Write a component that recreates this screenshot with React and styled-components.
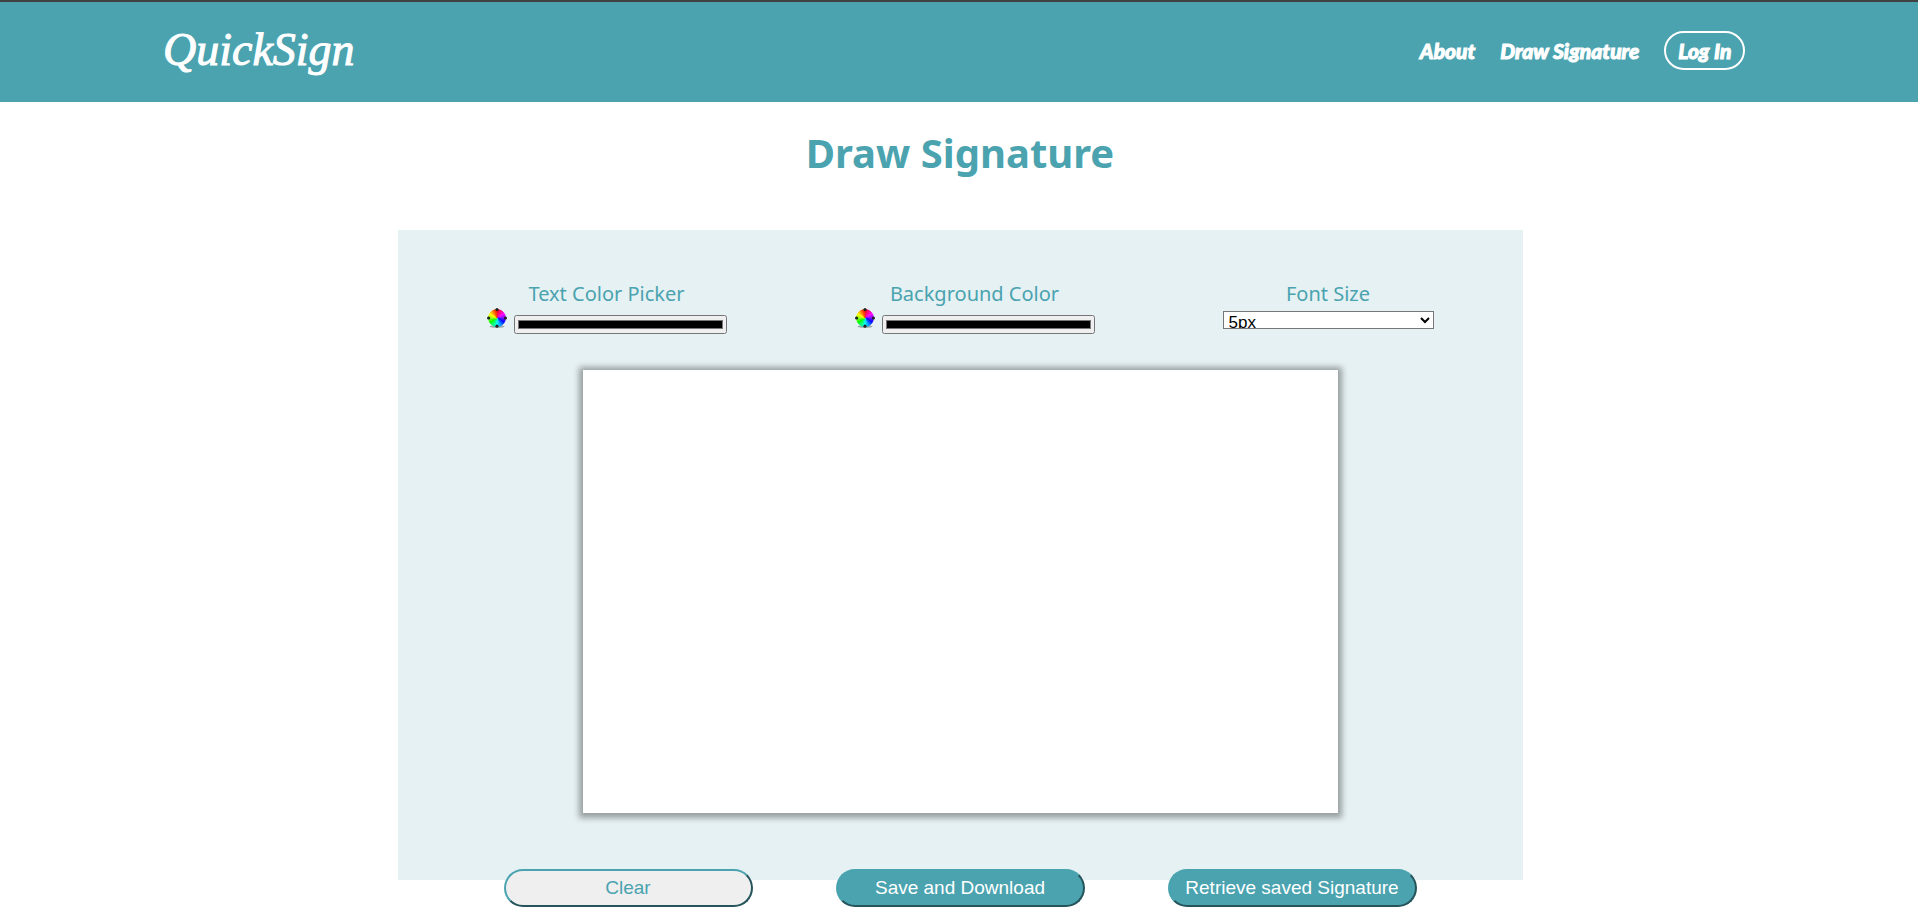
import React, { useRef, useState } from "react";
import styled, { createGlobalStyle } from "styled-components";

const teal = "#4aa3af";

const GlobalStyle = createGlobalStyle`
  * { box-sizing: border-box; }
  body {
    margin: 0;
    background: #fff;
    font-family: "Noto Sans", sans-serif;
  }
`;

const Header = styled.header`
  display: flex;
  align-items: center;
  justify-content: space-between;
  height: 102px;
  padding: 0 9% 4px 163px;
  border-top: 2px solid #414141;
  background: ${teal};
`;

const Logo = styled.a`
  color: #fff;
  font: italic 46px/60px "Liberation Serif", cursive;
  -webkit-text-stroke: 1px #fff;
  text-decoration: none;
`;

const Nav = styled.nav`
  display: flex;
  align-items: center;
  gap: 25px;
`;

const NavLink = styled.a`
  padding: ${(p) => (p.$outlined ? "0 12px" : "0")};
  border: ${(p) => (p.$outlined ? "2px solid #fff" : "0")};
  border-radius: 20px;
  color: #fff;
  font: italic 900 21px/35px Lato, sans-serif;
  -webkit-text-stroke: 1px #fff;
  text-decoration: none;
`;

const Main = styled.main`
  display: flex;
  flex-direction: column;
  align-items: center;
  padding: 23px 0 0 2px;
`;

const Title = styled.h1`
  margin: 0 0 49px;
  color: ${teal};
  font-size: 40px;
  line-height: 56px;
`;

const Panel = styled.section`
  display: flex;
  flex-direction: column;
  align-items: center;
  width: 100%;
  max-width: 1125px;
  padding: 50px 89px 67px;
  background: #e6f1f3;
`;

const Tools = styled.div`
  display: flex;
  justify-content: space-between;
  width: 100%;
  height: 90px;
`;

const Field = styled.div`
  display: flex;
  flex-direction: column;
  align-items: center;
`;

const Label = styled.label`
  color: ${teal};
  font-size: 20px;
  line-height: 28px;
`;

const PickerRow = styled.div`
  display: flex;
  align-items: flex-end;
  gap: 7px;
`;

const Wheel = styled.svg`
  width: 20px;
  height: 20px;
  margin-bottom: 6px;
`;

const ColorInput = styled.input`
  width: 213px;
  height: 19px;
  margin-top: 7px;
  padding: 0 1px;
`;

const SizeSelect = styled.select`
  width: 211px;
  height: 18px;
  margin-top: 3px;
  padding: 0 2px 0 1px;
  border: 1px solid #767676;
  border-radius: 0;
  background: #fff;
  color: #000;
  font: 17px "Liberation Sans", sans-serif;
`;

const Pad = styled.canvas`
  width: 80%;
  max-width: 755px;
  height: 443px;
  background: #fff;
  box-shadow: 0 1px 6px 4px rgba(0, 0, 0, 0.34);
  cursor: crosshair;
`;

const Actions = styled.div`
  display: flex;
  flex-wrap: wrap;
  justify-content: center;
  gap: 83px;
  margin-top: -11px;
`;

const Button = styled.button`
  width: 249px;
  height: 38px;
  padding: 0;
  border: 2px outset ${teal};
  border-radius: 20px;
  background: ${(p) => (p.$plain ? "#efefef" : teal)};
  color: ${(p) => (p.$plain ? teal : "#fff")};
  font: 19px "Liberation Sans", sans-serif;
`;

const slices = Array.from({ length: 24 }, (_, i) => i * 15);

function ColorWheel() {
  const point = (deg) => {
    const a = ((deg - 90) * Math.PI) / 180;
    return `${10 + 8.6 * Math.cos(a)} ${10 + 8.6 * Math.sin(a)}`;
  };
  return (
    <Wheel viewBox="0 0 20 20" aria-hidden="true">
      <ellipse cx="10" cy="18.4" rx="7.5" ry="1.4" fill="#7b8688" opacity=".7" />
      {slices.map((deg) => (
        <path
          key={deg}
          d={`M10 10L${point(deg - 7.5)}A8.6 8.6 0 0 1 ${point(deg + 7.5)}Z`}
          fill={`hsl(${360 - deg} 100% 50%)`}
          stroke={`hsl(${360 - deg} 100% 50%)`}
          strokeWidth=".5"
          strokeLinejoin="round"
        />
      ))}
      <g fill="#222">
        <circle cx="10" cy="1.6" r="1.6" />
        <circle cx="10" cy="18.2" r="1.6" />
        <circle cx="1.6" cy="10" r="1.6" />
        <circle cx="18.4" cy="10" r="1.6" />
      </g>
    </Wheel>
  );
}

function ColorField({ id, label, value, onChange }) {
  return (
    <Field>
      <Label htmlFor={id}>{label}</Label>
      <PickerRow>
        <ColorWheel />
        <ColorInput id={id} type="color" value={value} onChange={(e) => onChange(e.target.value)} />
      </PickerRow>
    </Field>
  );
}

export default function App() {
  const pad = useRef(null);
  const drawing = useRef(false);
  const [ink, setInk] = useState("#000000");
  const [paper, setPaper] = useState("#000000");
  const [size, setSize] = useState("5");

  const position = (e) => {
    const r = pad.current.getBoundingClientRect();
    return [
      ((e.clientX - r.left) * pad.current.width) / r.width,
      ((e.clientY - r.top) * pad.current.height) / r.height,
    ];
  };
  const start = (e) => {
    drawing.current = true;
    const ctx = pad.current.getContext("2d");
    ctx.beginPath();
    ctx.moveTo(...position(e));
  };
  const move = (e) => {
    if (!drawing.current) return;
    const ctx = pad.current.getContext("2d");
    ctx.strokeStyle = ink;
    ctx.lineWidth = Number(size);
    ctx.lineCap = "round";
    ctx.lineTo(...position(e));
    ctx.stroke();
  };
  const stop = () => {
    drawing.current = false;
  };
  const fill = (color) => {
    setPaper(color);
    const ctx = pad.current.getContext("2d");
    ctx.fillStyle = color;
    ctx.fillRect(0, 0, pad.current.width, pad.current.height);
  };
  const clear = () => {
    pad.current.getContext("2d").clearRect(0, 0, pad.current.width, pad.current.height);
  };
  const save = () => {
    const url = pad.current.toDataURL();
    localStorage.setItem("signature", url);
    const link = document.createElement("a");
    link.href = url;
    link.download = "signature.png";
    link.click();
  };
  const retrieve = () => {
    const url = localStorage.getItem("signature");
    if (!url) return;
    const image = new Image();
    image.onload = () => pad.current.getContext("2d").drawImage(image, 0, 0);
    image.src = url;
  };

  return (
    <>
      <GlobalStyle />
      <Header>
        <Logo href="#home">QuickSign</Logo>
        <Nav>
          <NavLink href="#about">About</NavLink>
          <NavLink href="#draw">Draw Signature</NavLink>
          <NavLink href="#login" $outlined>Log In</NavLink>
        </Nav>
      </Header>
      <Main>
        <Title>Draw Signature</Title>
        <Panel>
          <Tools>
            <ColorField id="ink" label="Text Color Picker" value={ink} onChange={setInk} />
            <ColorField id="paper" label="Background Color" value={paper} onChange={fill} />
            <Field>
              <Label htmlFor="size">Font Size</Label>
              <SizeSelect id="size" value={size} onChange={(e) => setSize(e.target.value)}>
                {["5", "10", "20", "30", "40", "50"].map((s) => (
                  <option key={s} value={s}>{s}px</option>
                ))}
              </SizeSelect>
            </Field>
          </Tools>
          <Pad
            ref={pad}
            width={755}
            height={443}
            onPointerDown={start}
            onPointerMove={move}
            onPointerUp={stop}
            onPointerLeave={stop}
          />
        </Panel>
        <Actions>
          <Button type="button" $plain onClick={clear}>Clear</Button>
          <Button type="button" onClick={save}>Save and Download</Button>
          <Button type="button" onClick={retrieve}>Retrieve saved Signature</Button>
        </Actions>
      </Main>
    </>
  );
}
